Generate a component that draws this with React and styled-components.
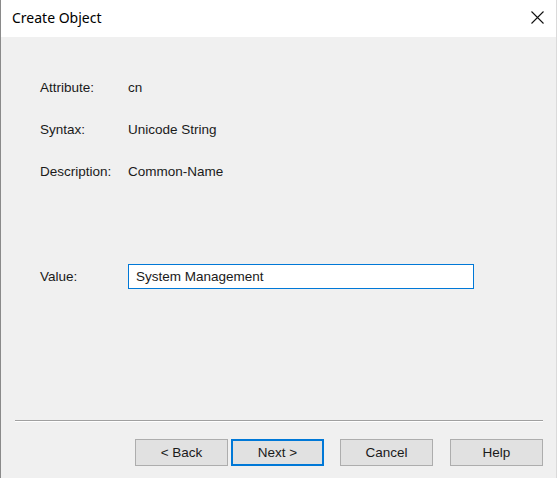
import React from "react";
import styled, { createGlobalStyle } from "styled-components";

const GlobalStyle = createGlobalStyle`
  html, body {
    margin: 0;
    padding: 0;
    background: #f0f0f0;
  }
  #root {
    width: 557px;
    height: 478px;
  }
`;

const Window = styled.div`
  box-sizing: border-box;
  width: 557px;
  height: 478px;
  display: flex;
  flex-direction: column;
  background: #f0f0f0;
  border-left: 1px solid #8a8a8a;
  border-right: 1px solid #dadada;
  font-family: "Liberation Sans", Arial, sans-serif;
  font-size: 13.5px;
  color: #1a1a1a;
`;

const TitleBar = styled.div`
  height: 37px;
  flex: none;
  display: flex;
  align-items: center;
  justify-content: space-between;
  background: #ffffff;
  padding: 0 12px 3px 11px;
  box-sizing: border-box;
`;

const Title = styled.span`
  font-family: "Noto Sans", "Open Sans", sans-serif;
  font-size: 14px;
  color: #000;
`;

const CloseButton = styled.button`
  border: 0;
  background: transparent;
  padding: 0;
  width: 14px;
  height: 14px;
  display: flex;
  align-items: center;
  justify-content: center;
  margin-right: 0;
`;

const Body = styled.div`
  flex: 1;
  display: flex;
  flex-direction: column;
  padding: 40px 0 0 39px;
`;

const Fields = styled.div`
  display: flex;
  flex-direction: column;
  gap: 22px;
`;

const Row = styled.div`
  display: flex;
  align-items: center;
  height: 20px;
`;

const Label = styled.span`
  width: 88px;
  flex: none;
`;

const ValueRow = styled.div`
  display: flex;
  align-items: center;
  margin-top: 83px;
`;

const TextInput = styled.input`
  box-sizing: border-box;
  width: 346px;
  height: 25px;
  border: 1px solid #0078d7;
  background: #ffffff;
  padding: 0 7px;
  font-family: "Liberation Sans", Arial, sans-serif;
  font-size: 13.5px;
  color: #1a1a1a;
  outline: none;
`;

const Spacer = styled.div`
  flex: 1;
`;

const Footer = styled.div`
  display: flex;
  flex-direction: column;
  padding: 0 13px 12px 14px;
`;

const Separator = styled.div`
  height: 1px;
  background: #a0a0a0;
  border-bottom: 1px solid #ffffff;
`;

const Buttons = styled.div`
  display: flex;
  justify-content: flex-end;
  margin-top: 17px;
`;

const Button = styled.button`
  box-sizing: border-box;
  width: 93px;
  height: 27px;
  margin-left: ${(p) => p.$gap || 0}px;
  background: #e1e1e1;
  border: ${(p) => (p.$primary ? "2px solid #0078d7" : "1px solid #adadad")};
  font-family: "Liberation Sans", Arial, sans-serif;
  font-size: 13.5px;
  color: #1a1a1a;
  padding: 0;
`;

export default function App() {
  return (
    <>
      <GlobalStyle />
      <Window>
        <TitleBar>
          <Title>Create Object</Title>
          <CloseButton aria-label="Close">
            <svg width="13" height="13" viewBox="0 0 13 13">
              <path d="M0.5 0.5 L12.5 12.5 M12.5 0.5 L0.5 12.5" stroke="#111" strokeWidth="1.1" fill="none" />
            </svg>
          </CloseButton>
        </TitleBar>
        <Body>
          <Fields>
            <Row>
              <Label>Attribute:</Label>
              <span>cn</span>
            </Row>
            <Row>
              <Label>Syntax:</Label>
              <span>Unicode String</span>
            </Row>
            <Row>
              <Label>Description:</Label>
              <span>Common-Name</span>
            </Row>
          </Fields>
          <ValueRow>
            <Label>Value:</Label>
            <TextInput defaultValue="System Management" />
          </ValueRow>
          <Spacer />
        </Body>
        <Footer>
          <Separator />
          <Buttons>
            <Button>&lt; Back</Button>
            <Button $primary $gap={3}>Next &gt;</Button>
            <Button $gap={16}>Cancel</Button>
            <Button $gap={17}>Help</Button>
          </Buttons>
        </Footer>
      </Window>
    </>
  );
}
